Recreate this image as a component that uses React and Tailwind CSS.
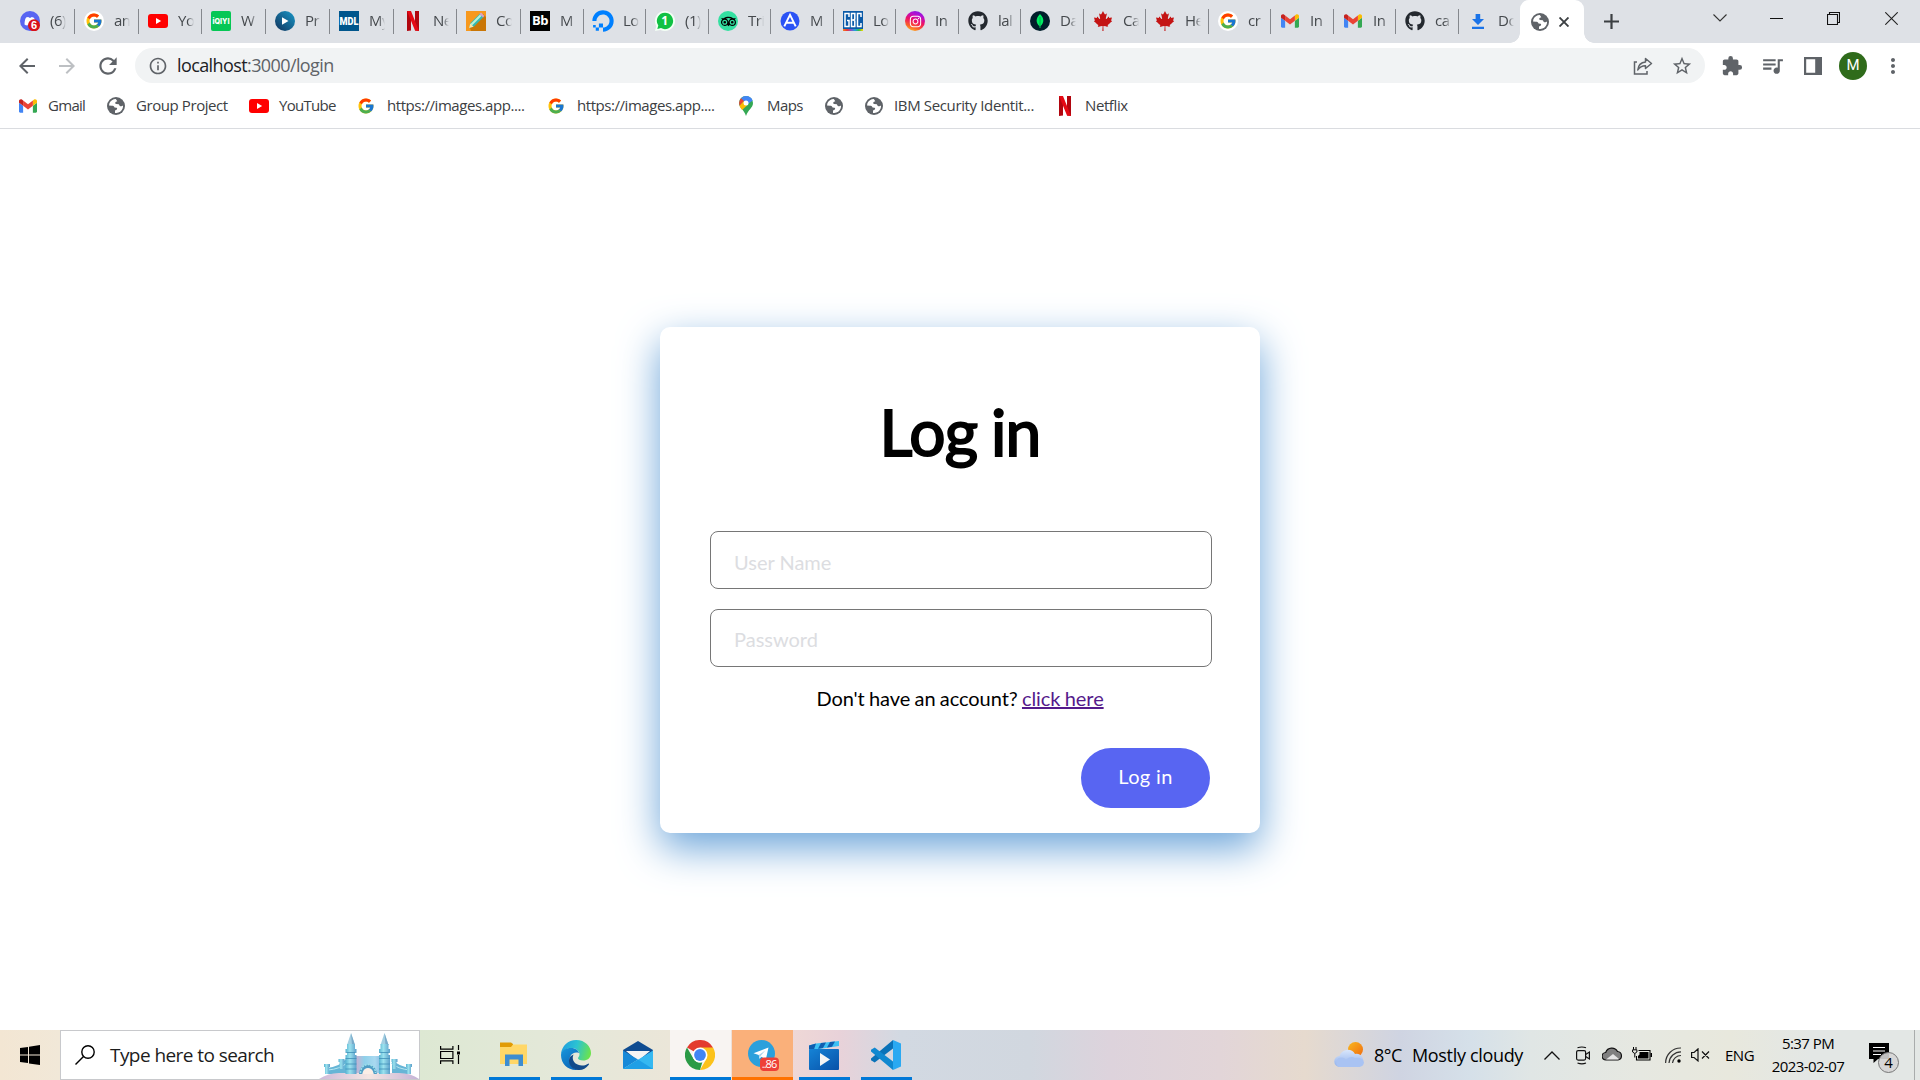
import React from "react";
import { FcGoogle } from "react-icons/fc";
import { FaGithub, FaCanadianMapleLeaf, FaDigitalOcean, FaInstagram } from "react-icons/fa";
import { SiTripadvisor } from "react-icons/si";
import {
  MdArrowBack,
  MdArrowForward,
  MdRefresh,
  MdInfoOutline,
  MdStarBorder,
  MdExtension,
  MdQueueMusic,
  MdMoreVert,
} from "react-icons/md";

/* ---------- site icons ---------- */

const Google = () => (
  <span className="flex size-5 items-center justify-center rounded-full bg-white">
    <FcGoogle className="size-[18px]" />
  </span>
);

const Gmail = () => (
  <svg viewBox="0 0 24 18" className="h-[14px] w-[18px]">
    <path d="M1.6 18h3.9V8.7L0 4.6v11.8C0 17.3.7 18 1.6 18z" fill="#4285f4" />
    <path d="M18.5 18h3.9c.9 0 1.6-.7 1.6-1.6V4.6l-5.500 4.100z" fill="#34a853" />
    <path d="M18.500 1.600v7.100L24 4.600V2.400c0-2-2.300-3.200-3.900-2z" fill="#fbbc04" />
    <path d="M5.500 8.700V1.600L12 6.500l6.500-4.900v7.100L12 13.600z" fill="#ea4335" />
    <path d="M0 2.400v2.200l5.500 4.100V1.600L3.900.4C2.300-.8 0 .4 0 2.400z" fill="#c5221f" />
  </svg>
);

const YouTube = () => (
  <svg viewBox="0 0 20 14" className="h-[14px] w-5">
    <rect width="20" height="14" rx="3" fill="#f00" />
    <path d="M8 4l5.200 3L8 10z" fill="#fff" />
  </svg>
);

const Netflix = () => (
  <svg viewBox="0 0 12 20" className="h-5 w-3">
    <path d="M0 0h4v19.600L0 20zM8 0h4v20l-4-.4z" fill="#b1060f" />
    <path d="M0 0h4l8 20-4-.4z" fill="#e50914" />
  </svg>
);

const Globe = () => (
  <svg viewBox="0 0 18 18" className="size-[18px]">
    <circle cx="9" cy="9" r="9" fill="#5f6368" />
    <path d="M8.800 2c-2.800 0-5.300 1.700-6.400 4.200L2 8.500l3 .2c1.500 0 2.300.6 2.500 1.800l2 .3c.9.300.8 1.500 0 2L8 13.500v2.400c3.500.6 6.500-1.200 7.600-4.300.4-1 .5-2 .4-3-1 .9-2.200.9-3.200.3l-1-1.600-2.600-.2c-1.200-.3-1.300-1.900-.2-2.400l1.300-.4z" fill="#fff" />
  </svg>
);

const Discord = () => (
  <svg viewBox="0 0 20 20" className="size-5">
    <circle cx="10" cy="10" r="10" fill="#5865f2" />
    <path d="M4.500 13.500c0-4 1-6.500 2-7.200L8.500 6l.5.800h2l.5-.8 2 .4c1.200 1 2 3.500 2 7.100-1 .8-2 1-3 1l-.6-1H8l-.6 1c-1 0-2-.3-2.900-1z" fill="#fff" />
    <circle cx="14" cy="14.300" r="6" fill="#d8121a" />
    <text x="14" y="18.200" fontSize="11" fontWeight="700" fontFamily="Liberation Sans, sans-serif" textAnchor="middle" fill="#fff">6</text>
  </svg>
);

const Iqiyi = () => (
  <svg viewBox="0 0 20 20" className="size-5">
    <rect width="20" height="20" rx="2" fill="#06c755" />
    <text x="10" y="12.800" fontSize="7.500" fontWeight="800" fontFamily="Inter, sans-serif" textAnchor="middle" fill="#fff" textLength="17" lengthAdjust="spacingAndGlyphs">iQIYI</text>
  </svg>
);

const Prime = () => (
  <svg viewBox="0 0 20 20" className="size-5">
    <defs>
      <linearGradient id="prime" x1="0" y1="1" x2="1" y2="0">
        <stop offset="0" stopColor="#12335c" />
        <stop offset="1" stopColor="#1898c8" />
      </linearGradient>
    </defs>
    <circle cx="10" cy="10" r="10" fill="url(#prime)" />
    <path d="M7 6.300l6.500 3.700L7 13.700z" fill="#fff" />
  </svg>
);

const Mdl = () => (
  <svg viewBox="0 0 20 20" className="size-5">
    <rect width="20" height="20" fill="#00568c" />
    <text x="10" y="14" fontSize="11" fontWeight="900" fontFamily="Roboto, sans-serif" textAnchor="middle" fill="#fff" textLength="19" lengthAdjust="spacingAndGlyphs">MDL</text>
  </svg>
);

const Pencil = () => (
  <svg viewBox="0 0 20 20" className="size-5">
    <rect width="20" height="20" fill="#f7981d" />
    <path d="M4 17L17 3l3 3v14H5z" fill="#c97606" />
    <path d="M3 17l1.500-5L14 2.500l3.500 3.500L8 15.500z" fill="#35b8b0" />
    <path d="M4.500 13L14 3.500l1.500 1.500L6 14.500z" fill="#b9f0d6" />
    <path d="M13.500 3l1.500-1.500 3.500 3.500L17 6.500z" fill="#d9a0c8" />
    <path d="M3 17l1.300-4.500 3.300 3.200z" fill="#fde3a5" />
  </svg>
);

const Bb = () => (
  <span className="flex size-5 items-center justify-center bg-black pb-px font-['Open_Sans',sans-serif] text-[13px] font-bold tracking-[-0.5px] text-white">Bb</span>
);

const WhatsApp = () => (
  <svg viewBox="0 0 20 20" className="size-5">
    <path d="M10 0a10 10 0 1 1-4.500 18.900L0 20l1.300-5A10 10 0 0 1 10 0z" fill="#f3fff5" />
    <path d="M10 1.700a8.200 8.200 0 1 1-4 15.400l-3.700 1 1-3.600A8.200 8.200 0 0 1 10 1.700z" fill="#10c143" />
    <text x="9.800" y="14.300" fontSize="12" fontWeight="700" fontFamily="Open Sans, sans-serif" textAnchor="middle" fill="#fff">1</text>
  </svg>
);

const Trip = () => (
  <span className="flex size-5 items-center justify-center rounded-full bg-[#34e0a1]">
    <SiTripadvisor className="size-[15px] text-black" />
  </span>
);

const BlueA = () => (
  <svg viewBox="0 0 20 20" className="size-5">
    <circle cx="10" cy="10" r="9.500" fill="#2b53f5" />
    <path d="M4.300 15.300L10 3.800l5.700 11.500M6.500 11.800h7" fill="none" stroke="#fff" strokeWidth="1.900" />
  </svg>
);

const Gbc = () => (
  <span className="flex size-5 flex-col bg-[#0a5aa8]">
    <svg viewBox="0 0 20 18" className="h-[18px] w-5" fill="none" stroke="#fff" strokeWidth="1.500">
      <path d="M6 6V2.500H2v13h4V9.500H4M8.500 2.500v13h3.300V9.800L10.500 9l1.300-.8V2.500zM8.500 9h2M18 6V2.500h-3.500v13H18V12" />
    </svg>
    <span className="h-[2px] bg-[linear-gradient(90deg,#f58220,#e33,#8a4fc7,#1aa4e0,#33bb44,#fd0)]" />
  </span>
);

const Insta = () => (
  <span className="flex size-5 items-center justify-center rounded-full bg-[linear-gradient(20deg,#fdc32a_5%,#f9622a_25%,#ee1166_50%,#b50fd0_75%,#6a1ff0)]">
    <FaInstagram className="size-[13px] text-white" />
  </span>
);

const Mongo = () => (
  <svg viewBox="0 0 20 20" className="size-5">
    <circle cx="10" cy="10" r="10" fill="#001e2b" />
    <path d="M10 3c4.500 4.500 4.300 9 .4 12.200V17h-.8v-1.800C5.700 12 5.500 7.500 10 3z" fill="#00ed64" />
    <path d="M10 6v9.500" stroke="#00a648" strokeWidth=".8" />
  </svg>
);

const Leaf = () => <FaCanadianMapleLeaf className="size-5 text-[#c41414]" />;
const Github = () => <FaGithub className="size-5 text-[#24292f]" />;
const Ocean = () => <FaDigitalOcean className="size-[22px] text-[#0080ff]" />;

const Download = () => (
  <svg viewBox="0 0 12 15" className="h-[15px] w-3" fill="#1a73e8">
    <path d="M3.600 0h4.600v5H12l-6 6-6-6h3.600zM0 12.800h12V15H0z" />
  </svg>
);

const MapPin = () => (
  <svg viewBox="0 0 14 20" className="h-5 w-[14px]">
    <path d="M7 0a7 7 0 0 1 7 7c0 5-5 6.500-7 13-2-6.500-7-8-7-13a7 7 0 0 1 7-7z" fill="#34a853" />
    <path d="M7 0a7 7 0 0 1 6.600 4.500L7.500 9 2 2.200A7 7 0 0 1 7 0z" fill="#4285f4" />
    <path d="M2 2.200L5 5 1 10a7 7 0 0 1 1-7.800z" fill="#ea4335" />
    <path d="M.6 9.800L4.600 5.200 8.500 9l-5.400 5C1.800 12.500.9 11 .6 9.800z" fill="#fbbc04" />
    <circle cx="7" cy="7" r="2.500" fill="#fff" />
  </svg>
);

/* ---------- tab strip ---------- */

const tabs = [
  ["(6)", Discord, "w-16"],
  ["an", Google, "w-16"],
  ["Yo", YouTube, "w-[63px]"],
  ["W", Iqiyi, "w-16"],
  ["Pr", Prime, "w-16"],
  ["My", Mdl, "w-16"],
  ["Ne", Netflix, "w-[63px]"],
  ["Co", Pencil, "w-16"],
  ["M", Bb, "w-[63px]"],
  ["Lo", Ocean, "w-[62px]"],
  ["(1)", WhatsApp, "w-[63px]"],
  ["Tri", Trip, "w-[62px]"],
  ["M", BlueA, "w-[63px]"],
  ["Lo", Gbc, "w-[62px]"],
  ["In", Insta, "w-[63px]"],
  ["lal", Github, "w-[62px]"],
  ["Da", Mongo, "w-[63px]"],
  ["Ca", Leaf, "w-[62px]"],
  ["He", Leaf, "w-[63px]"],
  ["cr", Google, "w-[62px]"],
  ["In", Gmail, "w-[63px]"],
  ["In", Gmail, "w-[62px]"],
  ["ca", Github, "w-[63px]"],
];

const TabLabel = ({ children }) => (
  <span className="-mt-[2px] ml-[9px] w-[16px] shrink-0 whitespace-nowrap text-[15px] tracking-[-0.5px] text-[#45494d] [mask-image:linear-gradient(90deg,#000_60%,transparent)]">
    {children}
  </span>
);

function TabStrip() {
  return (
    <div className="flex h-[43px] bg-[#dee1e6]">
      <div className="flex pl-[11px]">
        {tabs.map(([label, Icon, width], i) => (
          <div key={i} className={`flex h-[43px] shrink-0 items-center ${width}`}>
            <span className="-mt-px ml-2 flex w-[22px] shrink-0 items-center justify-center">
              <Icon />
            </span>
            <TabLabel>{label}</TabLabel>
            <span className="ml-auto h-[25px] w-px shrink-0 bg-[#85888d]" />
          </div>
        ))}
        <div className="flex w-[62px] shrink-0 items-center">
          <span className="-mt-px ml-2 flex w-[22px] items-center justify-center"><Download /></span>
          <TabLabel>Do</TabLabel>
        </div>
      </div>
      <div className="-ml-[11px] flex items-end">
        <span className="size-[10px] bg-[radial-gradient(circle_at_0_0,transparent_9.500px,#fff_10px)]" />
        <div className="flex h-[43px] w-16 items-center rounded-t-[9px] bg-white pl-[11px]">
          <Globe />
          <svg viewBox="0 0 10 10" className="ml-[10px] size-[10px]" stroke="#3c4043" strokeWidth="1.900"><path d="M.5.5l9 9M9.500.5l-9 9" /></svg>
        </div>
        <span className="size-[10px] bg-[radial-gradient(circle_at_100%_0,transparent_9.500px,#fff_10px)]" />
      </div>
      <svg viewBox="0 0 15 15" className="ml-[10px] mt-[14px] size-[15px]" stroke="#3c4043" strokeWidth="2.200"><path d="M7.500 0v15M0 7.500h15" /></svg>
      <div className="ml-auto mr-[22px] mt-[11px] flex h-[14px] items-center">
        <svg viewBox="0 0 14 14" className="size-[14px]" fill="none" stroke="#333" strokeWidth="1.100"><path d="M.5 3.500L7 10l6.500-6.500" /></svg>
        <svg viewBox="0 0 13 13" className="ml-[43px] size-[13px]" stroke="#111" strokeWidth="1"><path d="M0 6.500h13" /></svg>
        <svg viewBox="0 0 13 13" className="ml-11 size-[13px]" fill="none" stroke="#111" strokeWidth="1.100"><path d="M.5 2.500h10v10H.5zM2.500 2.500V.5h10v10h-2" /></svg>
        <svg viewBox="0 0 13 13" className="ml-[45px] size-[13px]" stroke="#222" strokeWidth="1.100"><path d="M.3.3l12.400 12.400M12.700.3L.3 12.700" /></svg>
      </div>
    </div>
  );
}

/* ---------- toolbar and bookmarks ---------- */

function Toolbar() {
  return (
    <div className="flex h-[45px] items-center text-[#5f6368]">
      <MdArrowBack className="ml-[15px] size-6" />
      <MdArrowForward className="ml-4 size-6 text-[#bdc0c3]" />
      <MdRefresh className="ml-4 size-[26px]" />
      <div className="ml-[14px] flex h-[35px] w-[1570px] items-center rounded-full bg-[#f1f3f4]">
        <MdInfoOutline className="ml-[13px] size-5" />
        <span className="ml-[9px] text-[18px] tracking-[-0.600px]">
          <span className="text-[#202124]">localhost</span>:3000/login
        </span>
        <svg viewBox="0 0 20 18" className="ml-auto h-[18px] w-5" fill="none" stroke="currentColor" strokeWidth="1.500">
          <path d="M4 5H1.500v12H14v-3" />
          <path d="M12.500 1.500l6 5-6 5V8.700c-3.500 0-6 1.300-7.700 4.300.4-4.500 3.200-7.500 7.700-8z" strokeLinejoin="round" />
        </svg>
        <MdStarBorder className="ml-[18px] mr-[12px] size-[22px]" />
      </div>
      <MdExtension className="ml-4 size-[22px]" />
      <MdQueueMusic className="ml-[17px] size-[25px]" />
      <svg viewBox="0 0 18 18" className="ml-[19px] size-[18px]"><path d="M0 0h18v18H0zM2.200 2.200v13.600h9V2.200z" fillRule="evenodd" fill="currentColor" /></svg>
      <span className="ml-[17px] flex size-7 items-center justify-center rounded-full bg-[#2f6b1b] font-['Roboto',sans-serif] text-[15px] text-white">M</span>
      <MdMoreVert className="ml-[14px] size-6" />
    </div>
  );
}

const PlainGoogle = () => <FcGoogle className="size-[18px]" />;

const bookmarks = [
  [Gmail, "Gmail", "w-[88px]", "ml-[9px] tracking-[-0.700px]"],
  [Globe, "Group Project", "w-[143px]", "ml-[9px] tracking-[-0.420px]"],
  [YouTube, "YouTube", "w-[107px]", "ml-[9px] tracking-[-0.700px]"],
  [PlainGoogle, "https://images.app....", "w-[190px]", "ml-[10px] tracking-[-0.450px]"],
  [PlainGoogle, "https://images.app....", "w-[190px]", "ml-[10px] tracking-[-0.450px]"],
  [MapPin, "Maps", "w-[88px]", "ml-[10px] tracking-[-0.600px]"],
  [Globe, "", "w-[40px]", ""],
  [Globe, "IBM Security Identit...", "w-[191px]", "ml-[9px] tracking-[-0.360px]"],
  [Netflix, "Netflix", "w-[80px]", "ml-[9px] tracking-[-0.400px]"],
];

function Bookmarks() {
  return (
    <div className="flex h-[41px] border-b border-[#dadce0] pb-[5px] pl-[17px] text-[15px] text-[#3c4043]">
      {bookmarks.map(([Icon, label, width, text], i) => (
        <div key={i} className={`flex shrink-0 items-center whitespace-nowrap ${width}`}>
          <span className="flex w-[22px] shrink-0 justify-center"><Icon /></span>
          <span className={`-mt-px ${text}`}>{label}</span>
        </div>
      ))}
    </div>
  );
}

/* ---------- page ---------- */

function LoginCard() {
  return (
    <form className="h-[506px] w-[600px] rounded-[10px] bg-white px-[50px] font-['Lato',sans-serif] shadow-[0_15px_40px_#6ba4d9]">
      <h1 className="pt-[66px] text-center text-[64px] leading-[77px] font-normal tracking-[-0.700px] [word-spacing:-2px] text-black [-webkit-text-stroke:2px_#000]">Log in</h1>
      <div className="mt-[61px] flex w-[502px] flex-col gap-5">
        <input type="text" placeholder="User Name" className="h-[58px] rounded-[8px] border border-[#767676] px-[23px] pt-[3px] text-[20px] placeholder:text-[#dcdde1]" />
        <input type="password" placeholder="Password" className="h-[58px] rounded-[8px] border border-[#767676] px-[23px] pt-px text-[20px] placeholder:text-[#dcdde1]" />
      </div>
      <p className="mt-[19px] text-center text-[20px] leading-6 tracking-[-0.070px] [word-spacing:-0.700px] text-black">
        Don't have an account? <a className="text-[#551a8b] underline" href="#signup">click here</a>
      </p>
      <button type="button" className="mt-[38px] ml-[371px] flex h-[60px] w-[129px] items-center justify-center rounded-[30px] bg-[#5865f2] pb-[4px] text-[20px] tracking-[0.350px] text-white">Log in</button>
    </form>
  );
}

/* ---------- taskbar ---------- */

const Castle = () => (
  <svg viewBox="0 0 100 47" className="h-[47px] w-[100px]">
    <defs>
      <linearGradient id="tower" x1="0" x2="1">
        <stop offset="0" stopColor="#58b4d3" />
        <stop offset=".4" stopColor="#9be2ee" />
        <stop offset="1" stopColor="#5c9fca" />
      </linearGradient>
      <linearGradient id="wall" x1="0" x2="1">
        <stop offset="0" stopColor="#d6a9cb" />
        <stop offset=".35" stopColor="#8fd0ea" />
        <stop offset=".7" stopColor="#a9d9f0" />
        <stop offset="1" stopColor="#7aaedb" />
      </linearGradient>
      <linearGradient id="ground" x1="0" x2="1">
        <stop offset="0" stopColor="#cdb9d9" />
        <stop offset=".5" stopColor="#f5e6e2" />
        <stop offset="1" stopColor="#c5b3d6" />
      </linearGradient>
    </defs>
    <path d="M35 24h30v18H35z" fill="url(#wall)" />
    <path d="M8 36q12-1 19-9v15H8zM92 36q-12-1-19-9v15h19z" fill="#66b5d6" />
    <path d="M9 38q12-1 19-7M91 38q-12-1-19-7" stroke="#b5e7f1" fill="none" />
    <path d="M0 47q9-6 20-6h60q12 0 20 6z" fill="url(#ground)" />
    <path d="M40 42a9 9.500 0 0 1 18 0h-3.500a5.500 6 0 0 0-11 0z" fill="#4f9cc4" />
    <path d="M41.500 41a7.500 8.500 0 0 1 15 0" fill="none" stroke="#9ee0ea" strokeWidth="1.500" strokeDasharray="2 1" />
    <path d="M43.500 42a5.500 6 0 0 1 11 0z" fill="#fbeee6" />
    {[32, 65.500].map((x) => (
      <g key={x} transform={`translate(${x - 5.500} 0)`}>
        <path d="M1.500 13L5.500 1l4 12z" fill="#a3cfe2" />
        <path d="M5.500 1l4 12h-3z" fill="#79aac9" />
        <path d="M1.500 12h8v12h-8zM0 26h11v16H0z" fill="url(#tower)" />
        <path d="M0 17h11v3H0zM0 23h11v3H0z" fill="url(#tower)" />
        <path d="M0 20.500h11M0 26.500h11M0 32h11M0 37h11" stroke="#3f8fb8" strokeWidth=".8" />
      </g>
    ))}
    {[5, 19.500, 72.500, 87].map((x, i) => (
      <g key={x} transform={`translate(${x} ${i === 0 || i === 3 ? 32 : 27})`} fill="url(#tower)">
        <path d="M0 0h6v3H0zM1 3h4v7H1z" />
      </g>
    ))}
  </svg>
);

const Explorer = () => (
  <svg viewBox="0 0 27 24" className="mb-[2px] h-6 w-[27px]">
    <path d="M0 .5h11l2 1.500v4H0z" fill="#e19b05" />
    <path d="M0 5h11l2-2.500h14V22H0z" fill="#ffd767" />
    <path d="M5 12.500h18V24h-4.500v-6.500h-9V24H5z" fill="#3d8dd0" />
  </svg>
);

const Edge = () => (
  <svg viewBox="0 0 30 30" className="ml-px size-[30px]">
    <defs>
      <linearGradient id="eTop" x1="0" y1=".3" x2="1" y2=".5">
        <stop offset="0" stopColor="#1f9de0" />
        <stop offset=".5" stopColor="#2cc3d2" />
        <stop offset="1" stopColor="#6be34c" />
      </linearGradient>
      <linearGradient id="eLeft" x1="0" y1="0" x2=".6" y2="1">
        <stop offset="0" stopColor="#1997dc" />
        <stop offset="1" stopColor="#0a65b8" />
      </linearGradient>
    </defs>
    <path d="M0 14C.8 6 7 0 15.200 0 24 0 30 6.500 30 13c0 5-3.700 7.600-7.700 7.600-3.600 0-5.300-1.300-5.300-2.300s1.500-1.600 1.500-4C18.500 11 15 8 10.500 8 6 8 2 10.500 0 14z" fill="url(#eTop)" />
    <path d="M0 15C0 10.500 5 8 10 8c4.500 0 7.500 2.500 8 5-6-2-9.500 2.500-9.500 7C8.500 25.500 13 29.500 18 29.700 8 31.500 0 24.500 0 15z" fill="url(#eLeft)" />
    <path d="M12.500 14.500C10 20 14 25.500 21 25.500c3 0 4.800-1 6.200-1.800.8-.4 1 .4.600 1-3 4-6.800 5.500-10.800 5.300-6-.5-9.500-5.500-9-10 .3-2.800 2-4.500 4.500-5.500z" fill="#114a8b" />
  </svg>
);

const Mail = () => (
  <svg viewBox="0 0 30 28" className="h-7 w-[30px]">
    <path d="M0 9L15 0l15 9-2 9H2z" fill="#0f4c91" />
    <path d="M3 10h24l-12 10z" fill="#f4f4f4" />
    <path d="M0 9.500l15 9L0 28z" fill="#1689d8" />
    <path d="M30 9.500L0 28h30z" fill="#35b8f1" />
    <path d="M15 18.500L30 28H0z" fill="#1f9fe6" />
  </svg>
);

const Chrome = () => (
  <svg viewBox="0 0 30 30" className="size-[30px]">
    <path d="M15 15L2 7.500a15 15 0 0 1 26 0z" fill="#e33b2e" />
    <path d="M15 7.500h13A15 15 0 0 1 15 30l6.500-11.200z" fill="#fcc21b" />
    <path d="M2 7.500l6.500 11.200c2 3.500 6 4.500 8.800 3.500L15 30A15 15 0 0 1 2 7.500z" fill="#2a9a46" />
    <circle cx="15" cy="15" r="7.500" fill="#fff" />
    <circle cx="15" cy="15" r="5.900" fill="#4285f4" />
  </svg>
);

const Telegram = () => (
  <svg viewBox="0 0 33 32" className="ml-[6px] mt-[2px] h-8 w-[33px]">
    <circle cx="13.500" cy="13.500" r="13.500" fill="#2ba0dc" />
    <path d="M5.500 13.300L20.500 7.600l-2.700 12.200-4.300-3-2.200 2-.5-3.800z" fill="#fff" />
    <path d="M10.800 15l6.500-4.500-4.800 5.400-.7 2.600z" fill="#a9d1ea" />
    <rect x="12" y="17.500" width="19" height="13.500" rx="4" fill="#ee4037" />
    <text x="21.500" y="28.300" fontSize="11" fontFamily="Open Sans, sans-serif" textAnchor="middle" fill="#fff" textLength="15.500">..86</text>
  </svg>
);

const Movies = () => (
  <svg viewBox="0 0 30 29" className="ml-[2px] h-[29px] w-[30px]">
    <defs>
      <linearGradient id="clap" x1="0" x2="1" y2="1">
        <stop offset="0" stopColor="#1583d6" />
        <stop offset="1" stopColor="#0851a8" />
      </linearGradient>
    </defs>
    <path d="M0 4.500L7 2.500 30 0v5L7 8.500H0z" fill="#3cc0f4" />
    <path d="M0 4.500l7-2-2 6H0zM12 2l5-.6-3 5.600-5 .8zM21 1l5-.5-3 5.300-5 .8z" fill="#0f5eb0" />
    <rect y="8" width="30" height="21" rx="1" fill="url(#clap)" />
    <path d="M11 12l10 6.500L11 25z" fill="#f5f5f5" />
  </svg>
);

const Code = () => (
  <svg viewBox="0 0 30 30" className="ml-[2px] size-[30px]">
    <path d="M22 0v8.500L3.700 22.500 0 20.300v-1.800z" fill="#0a72b8" />
    <path d="M22 30v-8.500L3.700 7.500 0 9.700v1.800z" fill="#1088d0" />
    <path d="M22 0l8 3.500v23L22 30z" fill="#2aa9f2" />
  </svg>
);

const apps = [
  [Explorer, "w-[62px]", "w-[51px] bg-[#0078d7]"],
  [Edge, "w-[62px]", "w-[51px] bg-[#0078d7]"],
  [Mail, "w-[63px]", "w-0"],
  [Chrome, "w-[61px] bg-[#f8f4f2]", "w-[61px] bg-[#0078d7]"],
  [Telegram, "ml-px w-[61px] bg-[#fab07a]", "w-[61px] bg-[#ff7200]"],
  [Movies, "w-[62px]", "w-[51px] bg-[#0078d7]"],
  [Code, "w-[62px]", "w-[51px] bg-[#0078d7]"],
];

function Taskbar() {
  return (
    <footer className="flex h-[50px] items-center bg-[linear-gradient(90deg,#f3e6d3_0,#f1e8d8_60px,#dde8d3_420px,#e4e8d9_560px,#ebe6d9_670px,#efd8d6_790px,#e8d2d9_840px,#d2d9e2_900px,#d1d7df_1030px,#ddd3dc_1110px,#e2d5d8_1220px,#e6dace_1305px,#cfd4e2_1400px,#d5e0e9_1470px,#e0e6e5_1530px,#e6e8e1_1640px,#e8e8dd_1730px,#e3e7e5_1810px,#e3e7e5_100%)] text-black">
      <div className="flex w-[60px] justify-center">
        <svg viewBox="0 0 20 20" className="size-5"><path d="M0 3l8-1.100v7.600H0zM9 1.700L20 0v9.500H9zM0 10.500h8v7.600L0 17zM9 10.500h11V20L9 18.400z" /></svg>
      </div>
      <div className="flex h-[50px] w-[360px] items-center border border-[#c8c9cc] bg-white">
        <svg viewBox="0 0 20 20" className="ml-[14px] size-5" fill="none" stroke="#000" strokeWidth="1.400"><circle cx="13" cy="7" r="6.200" /><path d="M8.500 11.500L.5 19.500" /></svg>
        <span className="ml-[15px] text-[19px] tracking-[-0.560px] text-[#1c1c1c]">Type here to search</span>
        <span className="ml-auto mt-px"><Castle /></span>
      </div>
      <svg viewBox="0 0 20 20" className="ml-5 size-5" fill="none" stroke="#000" strokeWidth="1.200"><path d="M.6 1v3.200h12.300V1M.6 19v-3.200h12.300V19M.6 6.500h12.300v7H.6zM18.500 0v5M18.500 10v9" /><path d="M17 6.500h3v3h-3z" fill="#000" stroke="none" /></svg>
      <div className="ml-[23px] flex">
        {apps.map(([Icon, slot, line], i) => (
          <div key={i} className={`flex h-[50px] flex-col items-center ${slot}`}>
            <span className="flex h-[47px] items-center pt-[3px] pr-[2px]"><Icon /></span>
            <span className={`h-[3px] ${line}`} />
          </div>
        ))}
      </div>
      <div className="ml-auto flex items-center">
        <svg viewBox="0 0 30 26" className="h-[26px] w-[30px]">
          <defs>
            <linearGradient id="cloud" x2="0" y2="1"><stop offset="0" stopColor="#d9e6fb" /><stop offset="1" stopColor="#8fb0ec" /></linearGradient>
            <linearGradient id="sun" x2="1" y2="1"><stop offset="0" stopColor="#f9b81f" /><stop offset="1" stopColor="#f06a10" /></linearGradient>
          </defs>
          <circle cx="21.500" cy="7.500" r="7.500" fill="url(#sun)" />
          <path d="M6 25a5.500 5.500 0 0 1-.5-11A8.500 8.500 0 0 1 21 12a6.500 6.500 0 0 1 3 13z" fill="url(#cloud)" />
          <path d="M5 25a5 5 0 0 1 2-9.500q3-.5 5 2 5-4 9-1.500 8-1 9 4.500-.5 4-5 4.500z" fill="#a9c3f3" />
        </svg>
        <span className="ml-[10px] w-[38px] text-[18px] tracking-[-0.500px] whitespace-nowrap">8°C</span>
        <span className="w-[132px] text-[18px] tracking-[-0.330px] whitespace-nowrap">Mostly cloudy</span>
        <svg viewBox="0 0 16 9" className="h-[9px] w-4" fill="none" stroke="#111" strokeWidth="1.300"><path d="M.5 8.500L8 1l7.500 7.500" /></svg>
        <svg viewBox="0 0 14 19" className="ml-4 h-[19px] w-[14px]" fill="none" stroke="#111" strokeWidth="1.200"><rect x=".6" y="4.600" width="9" height="9.500" rx="1.500" /><path d="M9.600 8.500l3.800-2.500v7l-3.800-2.500M1.500 1.800Q6 .2 10 1.800M1.500 17Q6 18.700 10 17" /></svg>
        <svg viewBox="0 0 20 14" className="ml-3 mb-[2px] h-[14px] w-5"><path d="M4 13a3.500 3.500 0 0 1-.3-7.500A6.500 6.500 0 0 1 15.500 4.500 4.300 4.300 0 0 1 16 13z" fill="#808080" stroke="#111" strokeWidth="1.200" /><path d="M4 12.400L11 7l6 5-1 .400z" fill="#e5e5e5" /></svg>
        <svg viewBox="0 0 20 15" className="ml-[10px] mb-px h-[15px] w-5"><path d="M6.500 3.500h11.500v9.500H4.500V9" fill="none" stroke="#000" strokeWidth="1.100" /><path d="M7.500 5h9v6.500H6V9l1.500-1.500zM18.500 6H20v4h-1.500z" /><path d="M1.500 0v2.500M4 0v2.500M.6 2.800h4.300v2.200L2.800 6.500.6 5zM2.800 6.500v4" fill="none" stroke="#000" /></svg>
        <svg viewBox="0 0 16 16" className="ml-[13px] size-4" fill="none" stroke="#333" strokeWidth="1.200"><path d="M.6 16A15 15 0 0 1 16 1M4 16A12 12 0 0 1 16 4.800M7.500 16A8.500 8.500 0 0 1 16 8.500" /><circle cx="14" cy="14" r="1.700" fill="#000" stroke="none" /></svg>
        <svg viewBox="0 0 19 14" className="ml-[10px] h-[14px] w-[19px]" fill="none" stroke="#111" strokeWidth="1.200"><path d="M.6 4.500h2.500L7 .9v12L3.100 9.500H.6zM11 3.500l7 7M18 3.500l-7 7" /></svg>
        <span className="ml-[15px] w-[36px] text-[15px] tracking-[-0.500px]">ENG</span>
        <div className="w-[94px] text-center text-[15px] leading-[23px] tracking-[-0.560px]">
          <div>5:37 PM</div>
          <div>2023-02-07</div>
        </div>
        <div className="relative ml-[14px] size-5">
          <svg viewBox="0 0 20 20" className="-mt-[2px] size-5"><path d="M0 0h20v16H9l-4.500 4v-4H0z" /><path d="M4 4.500h12M4 8h12M4 11.500h8" stroke="#fff" strokeWidth="1.200" /></svg>
          <span className="absolute top-[7px] left-[9px] flex size-[21px] items-center justify-center rounded-full border border-[#777] bg-[#d5d5d5]/90 text-[15px] leading-none">4</span>
        </div>
        <span className="ml-[25px] mr-[5px] h-[50px] w-px bg-[#a9acac]" />
      </div>
    </footer>
  );
}

export default function App() {
  return (
    <div className="flex h-[1080px] w-[1920px] flex-col overflow-hidden bg-white font-['Open_Sans','Noto_Sans',sans-serif]">
      <TabStrip />
      <Toolbar />
      <Bookmarks />
      <main className="flex flex-1 justify-center pt-[198px]">
        <LoginCard />
      </main>
      <Taskbar />
    </div>
  );
}
